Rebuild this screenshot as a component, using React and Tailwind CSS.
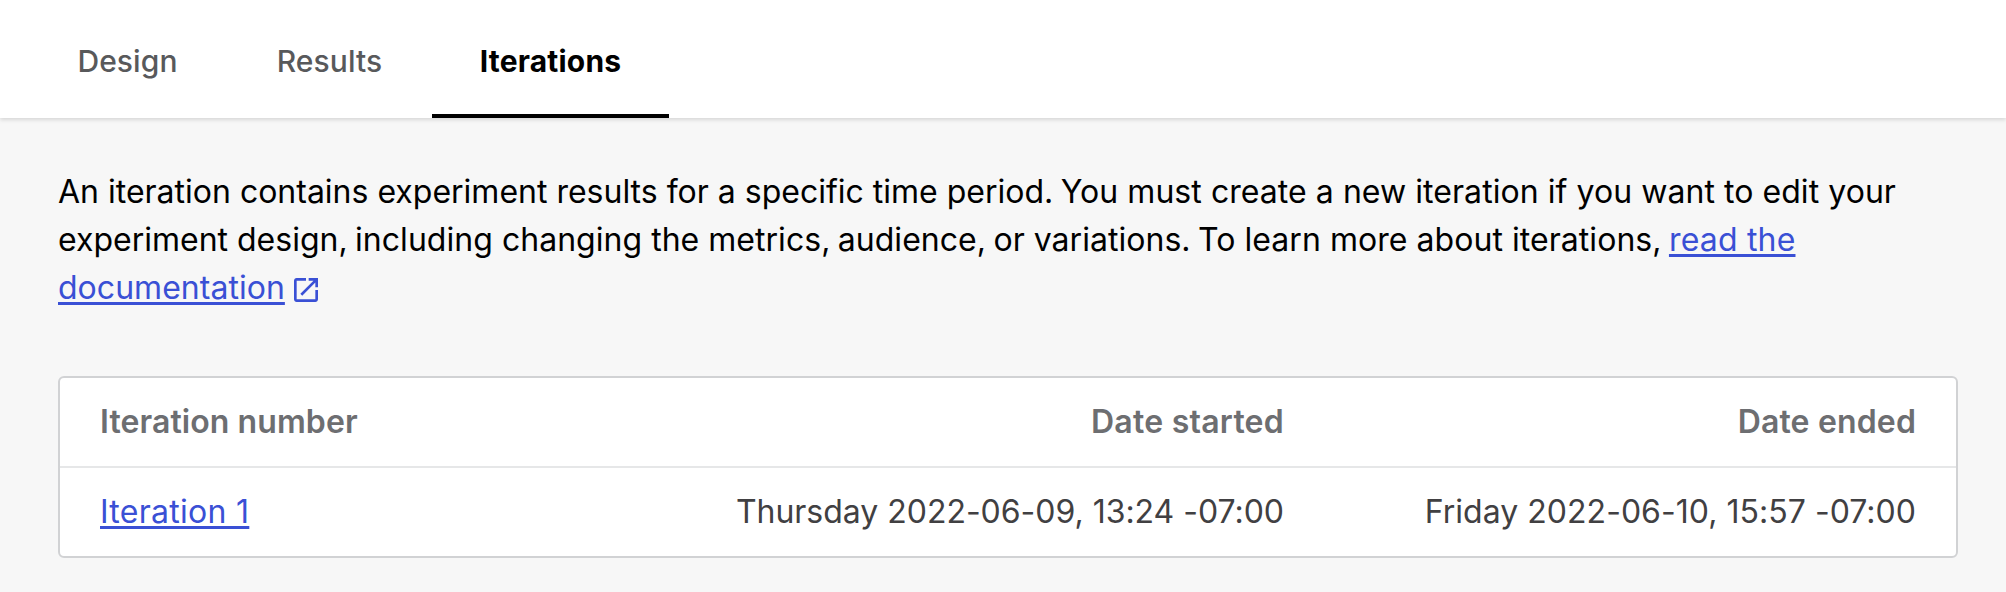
const tab = "flex h-[118px] items-center justify-center pt-[4px] pl-[1px] text-[30px] font-medium leading-none tracking-[0.1px] text-[#58595b]";
const link = "text-[#3a50d5] underline decoration-[3px] underline-offset-[3px] [text-decoration-skip-ink:none]";

function ExternalIcon() {
  return (
    <svg viewBox="0 0 24 24" className="ml-[5px] inline-block h-8 w-8 align-[-7px]" fill="#3a50d5">
      <path d="M19 19H5V5h7V3H5c-1.11 0-2 .9-2 2v14c0 1.1.89 2 2 2h14c1.1 0 2-.9 2-2v-7h-2v7zM14 3v2h3.59l-9.83 9.83 1.41 1.41L19 6.41V10h2V3h-7z" />
    </svg>
  );
}

function Mark({ children }) {
  return <span className="tracking-[-1.6px]">{children}</span>;
}

export default function App() {
  return (
    <div className="h-[592px] w-[2006px] overflow-hidden bg-[#f7f7f7] font-[Inter,sans-serif]">
      <nav className="flex h-[118px] bg-white pl-[28px] shadow-[0_2px_4px_rgba(0,0,0,0.13)]">
        <div className={tab + " w-[198px]"}>Design</div>
        <div className={tab + " w-[206px]"}>Results</div>
        <div className="flex h-[118px] w-[237px] items-center justify-center border-b-4 border-black pt-[8px] text-[30px] font-bold leading-none tracking-[0.2px] text-black">Iterations</div>
      </nav>
      <main className="px-[58px] pt-[50px]">
        <p className="whitespace-nowrap text-[32px] leading-[48px] tracking-[0.03px] text-black">
          <span className="tracking-normal">An iteration contains experiment results for a specific time period<Mark>.</Mark></span> <span className="tracking-[0.055px]">You must create a new iteration if you want to edit your</span><br />
          <span className="tracking-normal">experiment design</span><Mark>,</Mark> including changing the metrics<Mark>,</Mark> audience<Mark>,</Mark> or variations<Mark>.</Mark> <span className="tracking-[0.05px]">To learn more about iterations</span><Mark>,</Mark> <a className={link + " tracking-[0.18px]"}>read the</a><br />
          <a className={link}>documentation</a><ExternalIcon />
        </p>
        <section className="mt-[64px] w-[1900px] rounded-[6px] border-2 border-[#d1d2d4] bg-white text-[32px] text-[#414042]">
          <div className="flex h-[90px] items-center border-b-2 border-[#e6e7e8] px-[40px] font-semibold text-[#6d6e71]">
            <div className="w-[500px] tracking-[0.08px]">Iteration number</div>
            <div className="w-[684px] text-right tracking-[0.25px]">Date started</div>
            <div className="flex-1 text-right tracking-[0.15px]">Date ended</div>
          </div>
          <div className="flex h-[88px] items-center px-[40px]">
            <div className="w-[500px]"><a className={link + " tracking-[0.28px]"}>Iteration 1</a></div>
            <div className="w-[684px] text-right tracking-[-0.02px]">Thursday 2022-06-09, 13:24 -07:00</div>
            <div className="flex-1 text-right tracking-[0.03px]">Friday 2022-06-10, 15:57 -07:00</div>
          </div>
        </section>
      </main>
    </div>
  );
}
